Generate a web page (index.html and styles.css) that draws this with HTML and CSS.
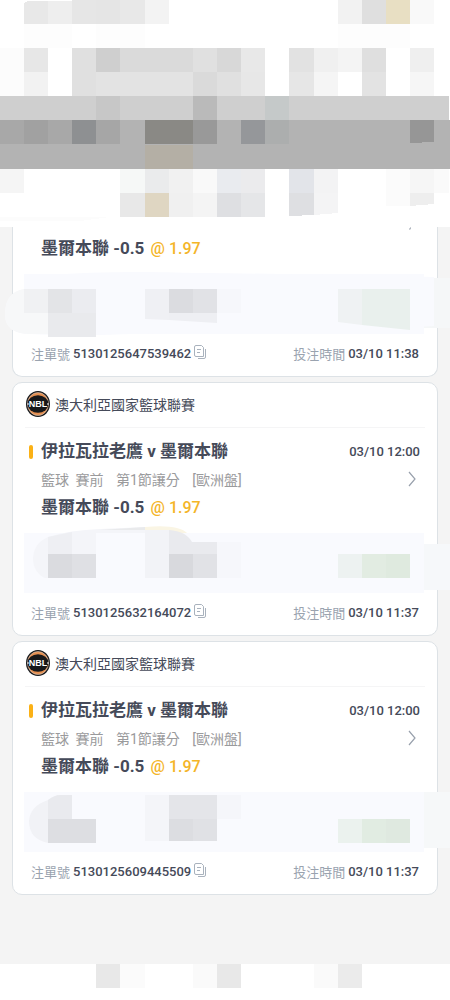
FILE: index.html
```
<!DOCTYPE html>
<html lang="zh-Hant">
<head>
    <meta charset="UTF-8">
    <meta name="viewport" content="width=device-width, initial-scale=1.0">
    <title>投注記錄</title>
    <link rel="stylesheet" href="styles.css">
</head>
<body>
    <!-- shared icons -->
    <svg class="icon-defs" aria-hidden="true">
        <symbol id="nbl" viewBox="0 0 24 26">
            <ellipse cx="12" cy="13" rx="12" ry="13" fill="#17181a"/>
            <ellipse cx="12" cy="13" rx="10.500" ry="11.500" fill="#e58f50" stroke="#d8d8d8" stroke-width=".5"/>
            <ellipse cx="12" cy="13" rx="10.500" ry="8.800" fill="#17181a"/>
            <path d="M1 13h2M21 13h2" stroke="#fff" stroke-width="1"/>
            <text x="12" y="16" text-anchor="middle" class="logo-text">NBL</text>
        </symbol>
        <symbol id="copy" viewBox="0 0 12 14">
            <path d="M2 .5h5.500l2 2v9H2a1.500 1.500 0 0 1-1.500-1.500V2A1.500 1.500 0 0 1 2 .5z" fill="none" stroke="#a9b2bd"/>
            <path d="M3 4.500h4M3 7.500h3M11.500 4v8a1.500 1.500 0 0 1-1.500 1.500H4" fill="none" stroke="#a9b2bd"/>
        </symbol>
        <symbol id="arrow" viewBox="0 0 8 16">
            <path d="M1 1l6 7-6 7" fill="none" stroke="#98a0ac" stroke-width="1.200"/>
        </symbol>
    </svg>

    <header class="top-mask">
        <svg class="mosaic" viewBox="0 0 450 227" preserveAspectRatio="none" shape-rendering="crispEdges" aria-hidden="true">
            <path d="M24 3Q26 1 32 1h16v23H24z" fill="#e8e8e8"/>
            <rect x="48" y="1" width="24" height="23" fill="#eeeeee"/>
            <rect x="72" width="24" height="24" fill="#e6e6e6"/>
            <rect x="96" width="24" height="24" fill="#e5e5e5"/>
            <rect x="120" width="25" height="24" fill="#e8e8e8"/>
            <rect x="145" width="24" height="24" fill="#f3f3f3"/>
            <rect x="338" width="24" height="24" fill="#f2f2f2"/>
            <rect x="362" width="24" height="24" fill="#dfdfdf"/>
            <rect x="386" width="24" height="24" fill="#e8dfc3"/>
            <rect x="410" width="24" height="24" fill="#f9f9f9"/>
            <rect x="24" y="24" width="48" height="24" fill="#fdfdfd"/>
            <rect x="96" y="24" width="49" height="24" fill="#fdfdfd"/>
            <rect x="338" y="24" width="72" height="24" fill="#fdfdfd"/>

            <rect y="48" width="24" height="48" fill="#fcfcfc"/>
            <rect x="24" y="48" width="24" height="24" fill="#e7e7e7"/>
            <rect x="72" y="48" width="24" height="24" fill="#e0e0e0"/>
            <rect x="96" y="48" width="24" height="24" fill="#cfcfcf"/>
            <rect x="120" y="48" width="73" height="24" fill="#dadada"/>
            <rect x="193" y="48" width="24" height="24" fill="#e0e0e0"/>
            <rect x="217" y="48" width="24" height="24" fill="#d8d8d8"/>
            <rect x="241" y="48" width="24" height="24" fill="#e8e8e8"/>
            <rect x="289" y="48" width="25" height="24" fill="#e2e2e2"/>
            <rect x="314" y="48" width="24" height="24" fill="#f0f0f0"/>
            <rect x="338" y="48" width="24" height="24" fill="#f4f4f4"/>
            <rect x="362" y="48" width="24" height="24" fill="#dfdfdf"/>
            <rect x="410" y="48" width="24" height="24" fill="#efefef"/>

            <rect x="24" y="72" width="24" height="24" fill="#f2f2f2"/>
            <rect x="72" y="72" width="24" height="24" fill="#e0e0e0"/>
            <rect x="96" y="72" width="97" height="24" fill="#e3e3e3"/>
            <rect x="193" y="72" width="24" height="24" fill="#dadada"/>
            <rect x="217" y="72" width="24" height="24" fill="#e0e0e0"/>
            <rect x="241" y="72" width="24" height="24" fill="#e7e7e7"/>
            <rect x="289" y="72" width="25" height="24" fill="#e6e6e6"/>
            <rect x="314" y="72" width="24" height="24" fill="#f5f5f5"/>
            <rect x="362" y="72" width="24" height="24" fill="#e3e3e3"/>
            <rect x="410" y="72" width="24" height="24" fill="#f6f6f6"/>

            <rect y="96" width="449" height="24" fill="#cfcfcf"/>
            <rect x="96" y="96" width="24" height="24" fill="#c7c7c7"/>
            <rect x="193" y="96" width="24" height="24" fill="#bababa"/>
            <rect x="265" y="96" width="24" height="24" fill="#c5c9c9"/>

            <rect y="120" width="450" height="49" fill="#b3b3b3"/>
            <rect y="120" width="24" height="24" fill="#a8a8a8"/>
            <rect x="24" y="120" width="24" height="24" fill="#a1a1a1"/>
            <rect x="48" y="120" width="24" height="24" fill="#a8a8a8"/>
            <rect x="72" y="120" width="24" height="24" fill="#8e9092"/>
            <rect x="96" y="120" width="24" height="24" fill="#a6a6a6"/>
            <rect x="145" y="120" width="48" height="24" fill="#8a8985"/>
            <rect x="193" y="120" width="24" height="24" fill="#999999"/>
            <rect x="241" y="120" width="24" height="24" fill="#95979a"/>
            <rect x="265" y="120" width="24" height="24" fill="#acaeae"/>
            <path d="M410 120h24v22l-24 1z" fill="#969696"/>
            <rect x="145" y="145" width="48" height="24" fill="#b4afa5"/>

            <rect y="169" width="24" height="24" fill="#f5f5f5"/>
            <rect x="120" y="169" width="25" height="24" fill="#f6f8f7"/>
            <rect x="145" y="169" width="24" height="24" fill="#eaebec"/>
            <rect x="169" y="169" width="24" height="24" fill="#f1f1f1"/>
            <rect x="193" y="169" width="24" height="24" fill="#f9f9f9"/>
            <rect x="217" y="169" width="24" height="24" fill="#e9ebef"/>
            <rect x="241" y="169" width="24" height="24" fill="#ebebed"/>
            <rect x="289" y="169" width="25" height="24" fill="#e2e4e9"/>
            <rect x="314" y="169" width="24" height="24" fill="#f3f3f4"/>
            <rect x="386" y="169" width="24" height="37" fill="#fbfbfb"/>
            <rect x="410" y="169" width="24" height="24" fill="#f6f6f6"/>
            <rect x="434" y="169" width="15" height="24" fill="#fafafa"/>

            <rect x="120" y="193" width="25" height="24" fill="#e8e8e8"/>
            <rect x="145" y="193" width="24" height="24" fill="#dfd6c2"/>
            <rect x="169" y="193" width="24" height="24" fill="#f0f0f0"/>
            <rect x="193" y="193" width="24" height="24" fill="#f4f4f4"/>
            <rect x="217" y="193" width="24" height="24" fill="#dedfe2"/>
            <rect x="241" y="193" width="24" height="24" fill="#e5e6e8"/>
            <path d="M289 193h25v22l-25 1z" fill="#dedfe2"/>
            <path d="M314 193h24v20l-24 2z" fill="#f4f4f5"/>
            <path d="M410 193h24v11l-24 2z" fill="#eeeeee"/>
            <path d="M0 217h110l-30 4H0z" fill="#fcfcfc"/>
        </svg>
    </header>

    <main class="bet-list">
        <article class="bet-card cut">
            <div class="bet-body">
                <p class="pick">墨爾本聯 -0.5 <span class="odds">@ 1.97</span></p>
            </div>
            <svg class="mask" viewBox="0 0 450 60" preserveAspectRatio="none" aria-hidden="true">
                <path d="M409-45l2-2v1l-1 2z" fill="#98a0ac"/>
                <rect x="24" width="400" height="60" fill="#f9fafe"/>
                <path d="M424 4h26v50h-26z" fill="#f5f7f8"/>
                <path d="M50 1Q110-4 200-1Q310 0 434 3V52Q300 60 180 58Q80 63 30 60Q5 60 5 40Q5 16 30 14V4z" fill="#f9fafe"/>
                <path d="M24 15h24v45H30Q5 60 5 40Q5 18 24 15z" fill="#f7f8f9"/>
                <path d="M24 15h24v24H24z" fill="#f0f1f3"/>
                <path d="M48 15h24v24H48z" fill="#e3e4e7"/>
                <path d="M72 15h24v24H72z" fill="#ebecf0"/>
                <path d="M48 39h48v24H48z" fill="#e9eaed"/>
                <path d="M145 15h24v31l-24-1z" fill="#eff0f4"/>
                <path d="M169 39h48v10l-48-3z" fill="#eeeff3"/>
                <path d="M169 15h24v24h-24z" fill="#dbdce0"/>
                <path d="M193 15h24v24h-24z" fill="#e1e2e6"/>
                <path d="M217 15h24v24h-24z" fill="#f6f7fb"/>
                <path d="M338 15h24v36l-24-3z" fill="#eff2f3"/>
                <path d="M362 15h48v41l-48-5z" fill="#e9f0ed"/>
            </svg>
            <footer class="bet-foot">
                <p>注單號 <b>5130125647539462</b> <button class="copy" type="button" aria-label="複製"><svg><use href="#copy"/></svg></button></p>
                <p>投注時間 <b>03/10 11:38</b></p>
            </footer>
        </article>

        <article class="bet-card">
            <div class="league">
                <svg class="logo" role="img" aria-label="NBL"><use href="#nbl"/></svg>
                <span>澳大利亞國家籃球聯賽</span>
            </div>
            <div class="bet-body">
                <div class="row">
                    <h2>伊拉瓦拉老鷹 v 墨爾本聯</h2>
                    <time>03/10 12:00</time>
                </div>
                <div class="row">
                    <p class="market"><span>籃球</span> <span>賽前</span> <span class="wide">第1節讓分</span> <span class="wide">[歐洲盤]</span></p>
                    <a class="more" href="#" aria-label="詳情"><svg><use href="#arrow"/></svg></a>
                </div>
                <p class="pick">墨爾本聯 -0.5 <span class="odds">@ 1.97</span></p>
            </div>
            <svg class="mask" viewBox="0 0 450 60" preserveAspectRatio="none" aria-hidden="true">
                <rect x="24" width="400" height="60" fill="#f9fafe"/>
                <path d="M424 11h26v46h-26z" fill="#f6f8fa"/>
                <path d="M48 4Q70-3 100-4L145-6V0H96V21H48V45H45Q33 39 33 25Q34 10 48 4z" fill="#f4f5f9"/>
                <path d="M48 4l24-5v22H48z" fill="#eeeff3"/>
                <path d="M100-3L145-6V-3z" fill="#e9eaec"/>
                <path d="M145-6Q178-9 187 0h-42z" fill="#faf5e4"/>
                <path d="M145-3h24v48h-24z" fill="#f2f3f7"/>
                <path d="M169-3Q186-2 192 9h25v12h-48z" fill="#e9eaee"/>
                <path d="M48 21h24v24H48z" fill="#dadbdf"/>
                <path d="M72 21h24v24H72z" fill="#dfe0e4"/>
                <path d="M169 21h24v24h-24z" fill="#d8d9dd"/>
                <path d="M193 21h24v24h-24z" fill="#e1e2e6"/>
                <path d="M217 9h24v36h-24z" fill="#f6f7fb"/>
                <path d="M338 21h24v24h-24z" fill="#edf2f1"/>
                <path d="M362 21h24v24h-24z" fill="#e2ece2"/>
                <path d="M386 21h24v24h-24z" fill="#dfeadf"/>
            </svg>
            <footer class="bet-foot">
                <p>注單號 <b>5130125632164072</b> <button class="copy" type="button" aria-label="複製"><svg><use href="#copy"/></svg></button></p>
                <p>投注時間 <b>03/10 11:37</b></p>
            </footer>
        </article>

        <article class="bet-card">
            <div class="league">
                <svg class="logo" role="img" aria-label="NBL"><use href="#nbl"/></svg>
                <span>澳大利亞國家籃球聯賽</span>
            </div>
            <div class="bet-body">
                <div class="row">
                    <h2>伊拉瓦拉老鷹 v 墨爾本聯</h2>
                    <time>03/10 12:00</time>
                </div>
                <div class="row">
                    <p class="market"><span>籃球</span> <span>賽前</span> <span class="wide">第1節讓分</span> <span class="wide">[歐洲盤]</span></p>
                    <a class="more" href="#" aria-label="詳情"><svg><use href="#arrow"/></svg></a>
                </div>
                <p class="pick">墨爾本聯 -0.5 <span class="odds">@ 1.97</span></p>
            </div>
            <svg class="mask" viewBox="0 0 450 60" preserveAspectRatio="none" aria-hidden="true">
                <rect x="24" width="400" height="60" fill="#f9fafe"/>
                <path d="M424 0h26v56h-26z" fill="#f6f8f9"/>
                <path d="M48 8Q55 3 60 3h12v24h24v24H48Q29 47 29 29Q30 14 48 8z" fill="#f1f2f6"/>
                <path d="M48 8Q55 3 60 3h12v24H48z" fill="#e9eaee"/>
                <path d="M48 27h48v24H48z" fill="#dddee2"/>
                <path d="M145 3h24v46h-24z" fill="#f4f5f9"/>
                <path d="M169 3h48v24h-48z" fill="#e4e5e9"/>
                <path d="M169 27h24v22h-24z" fill="#dcdde1"/>
                <path d="M193 27h24v22h-24z" fill="#e0e1e5"/>
                <path d="M217 3h24v24h-24z" fill="#f5f6fa"/>
                <path d="M338 27h24v24h-24z" fill="#ebf2ee"/>
                <path d="M362 27h24v24h-24z" fill="#e1ece2"/>
                <path d="M386 27h24v24h-24z" fill="#dfe9e0"/>
            </svg>
            <footer class="bet-foot">
                <p>注單號 <b>5130125609445509</b> <button class="copy" type="button" aria-label="複製"><svg><use href="#copy"/></svg></button></p>
                <p>投注時間 <b>03/10 11:37</b></p>
            </footer>
        </article>
    </main>

    <footer class="bottom-mask">
        <svg class="mosaic" viewBox="0 0 450 36" preserveAspectRatio="none" shape-rendering="crispEdges" aria-hidden="true">
            <rect x="96" width="24" height="24" fill="#e8e8e8"/>
            <rect x="120" width="25" height="24" fill="#fbfbfb"/>
            <rect x="193" width="24" height="24" fill="#fafafa"/>
            <rect x="217" width="24" height="24" fill="#e8e8e8"/>
            <rect x="314" width="24" height="24" fill="#fafafa"/>
            <rect x="338" width="24" height="24" fill="#ebebeb"/>
        </svg>
    </footer>
</body>
</html>
```
FILE: styles.css
```
* { margin: 0; padding: 0; box-sizing: border-box; }
body {
    display: flex;
    flex-direction: column;
    min-height: 100vh;
    font-family: Roboto, "Noto Sans CJK TC", sans-serif;
    font-size: 13px;
    background: #f4f4f4;
    color: #454a59;
    overflow-x: hidden;
}
.icon-defs { display: none; }
.top-mask, .bottom-mask { background: #fff; }
.mosaic {
    display: block;
    width: 100%;
}
.top-mask .mosaic { height: 227px; }
.bottom-mask { margin-top: auto; }
.bottom-mask .mosaic { height: 36px; }

.bet-list {
    display: flex;
    flex-direction: column;
    gap: 5px;
    padding: 0 12px;
}
.bet-card {
    background: #fff;
    border: 1px solid #dde2e6;
    border-radius: 10px;
}
.bet-card.cut {
    border-top: none;
    border-radius: 0 0 10px 10px;
}
.league {
    display: flex;
    align-items: center;
    gap: 4px;
    height: 45px;
    margin: 0 12px;
    padding-bottom: 2px;
    border-bottom: 1px solid #f5f5f6;
    font-size: 14px;
}
.logo {
    width: 26px;
    height: 26px;
}
.logo-text {
    font-family: "Liberation Sans Narrow", "Liberation Sans", sans-serif;
    font-size: 9px;
    font-weight: bold;
    fill: #fff;
}
.bet-body {
    padding: 9px 17px 12px 28px;
}
.cut .bet-body { padding-top: 7px; }
.row {
    display: flex;
    align-items: center;
    justify-content: space-between;
    height: 28px;
}
h2, .pick {
    height: 28px;
    font-size: 17px;
    font-weight: bold;
    line-height: 28px;
}
h2 {
    position: relative;
}
h2::before {
    content: "";
    position: absolute;
    left: -12px;
    top: 8px;
    width: 4px;
    height: 14px;
    border-radius: 2px;
    background: #fbb116;
}
time, .bet-foot b {
    font-size: 13px;
    font-weight: 500;
    color: #454a59;
}
.market {
    font-size: 14px;
    color: #9a9a9c;
}
.market span + span { margin-left: 3px; }
.market span + .wide { margin-left: 9px; }
.more {
    display: flex;
    padding: 4px;
}
.more svg {
    width: 8px;
    height: 16px;
}
.odds {
    margin-left: 2px;
    font-size: 16px;
    font-weight: 500;
    color: #f4b529;
}
.mask {
    display: block;
    width: calc(100% + 26px);
    height: 60px;
    margin: 0 -13px;
    overflow: visible;
}
.bet-foot {
    display: flex;
    align-items: center;
    justify-content: space-between;
    height: 42px;
    padding: 0 18px 3px;
    color: #9aa3af;
}
.bet-foot p {
    display: flex;
    align-items: center;
    gap: 3px;
}
.copy {
    margin-bottom: 3px;
    border: none;
    background: none;
}
.copy svg {
    display: block;
    width: 12px;
    height: 14px;
}
```
